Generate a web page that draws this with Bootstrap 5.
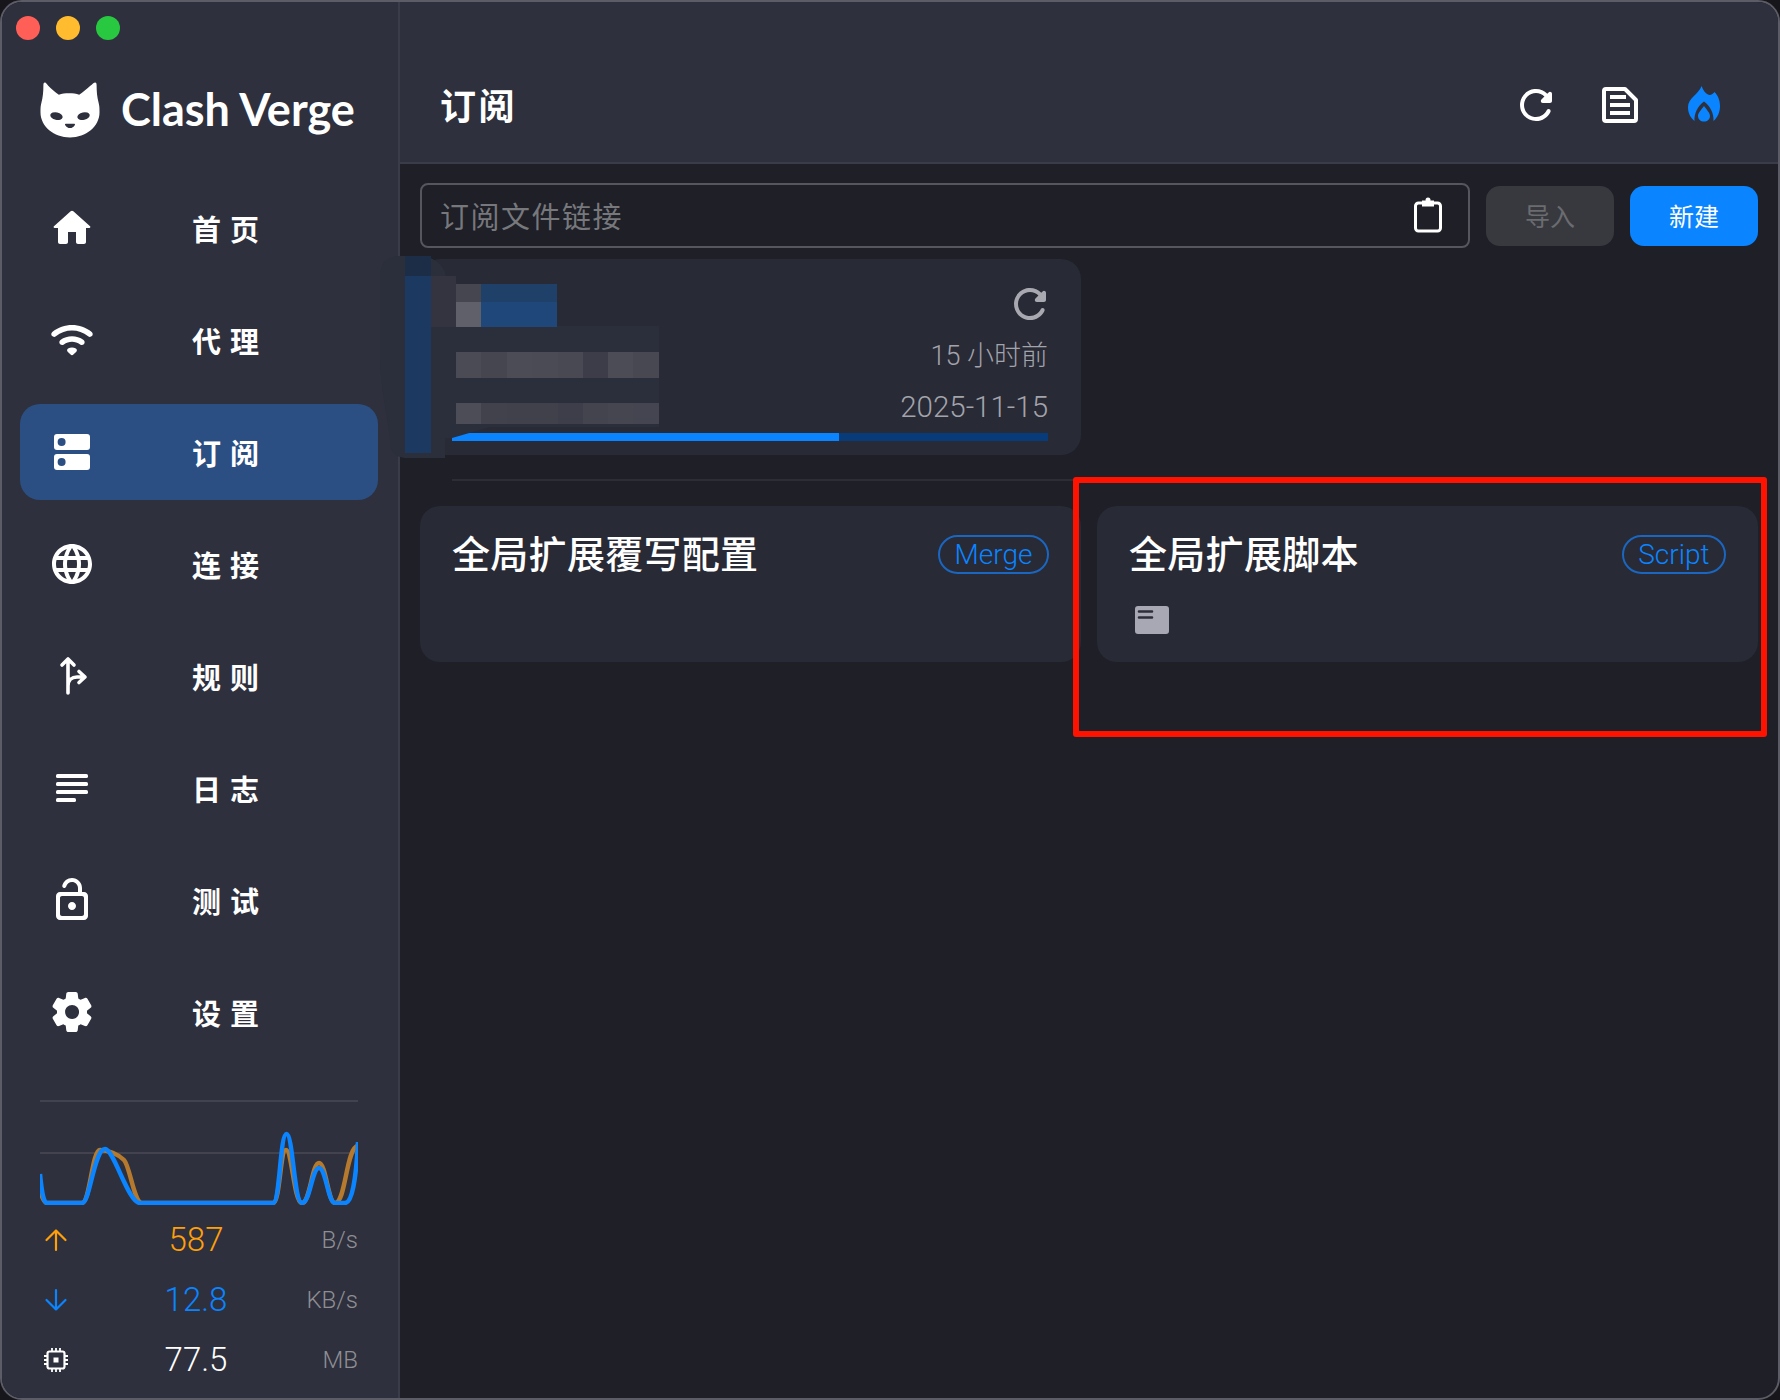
<!doctype html>
<html lang="zh-CN">
<head>
  <meta charset="utf-8">
  <title>Clash Verge</title>
  <link href="https://cdn.jsdelivr.net/npm/bootstrap@5.3.3/dist/css/bootstrap.min.css" rel="stylesheet">
  <style>
    html, body { width: 1780px; height: 1400px; overflow: hidden; background: #17171b; }
    body { font-family: Roboto, "Noto Sans CJK SC", sans-serif; color: #fff; }
    .cv-window { width: 1780px; height: 1400px; border: 2px solid #5b5c66; border-radius: 22px; overflow: hidden; background: #1e1f27; position: relative; }
    .cv-side { width: 398px; flex: none; background: #2e303d; border-right: 2px solid #3a3c49; }
    .cv-side > * { flex-shrink: 0; }
    .cv-lights { height: 54px; padding: 14px 0 0 14px; gap: 16px; }
    .cv-light { width: 24px; height: 24px; border-radius: 50%; }
    .cv-logo { height: 92px; margin-top: 7px; padding-left: 38px; gap: 21px; }
    .cv-brand { font-family: Lato, sans-serif; font-weight: 700; font-size: 45px; line-height: 1; }
    .cv-nav { margin-top: 25px; gap: 16px; padding: 0 20px 0 18px; }
    .cv-nav .nav-link { height: 96px; padding: 0 0 0 28px; border-radius: 20px; color: #fff; display: flex; align-items: center; }
    .cv-nav .nav-link.active { background: #2b4f83; }
    .cv-nav .nav-label { font-family: "Noto Sans CJK SC", sans-serif; font-weight: 700; font-size: 29px; letter-spacing: 9px; margin-left: 96px; line-height: 1; }
    .cv-traffic { margin-top: 40px; padding: 0 40px 0 38px; }
    .cv-sep { height: 2px; background: #42434f; }
    .cv-graph { display: block; }
    .cv-stat { height: 60px; }
    .cv-stat-ico { width: 36px; flex: none; padding-left: 4px; }
    .cv-stat-val { width: 240px; flex: none; text-align: center; font-size: 33px; font-weight: 300; }
    .cv-stat-unit { flex: 1; margin-left: -60px; text-align: right; font-size: 24px; color: #8e8e93; font-weight: 300; }
    .cv-up { color: #ff9f0a; margin-top: 5px; } .cv-down { color: #0a84ff; }
    .cv-head { height: 162px; background: #2e303d; border-bottom: 2px solid #3a3c49; padding: 46px 50px 0 40px; }
    .cv-title { font-family: "Noto Sans CJK SC", sans-serif; font-size: 36px; font-weight: 700; letter-spacing: 2.500px; margin: 0; }
    .cv-tools { gap: 36px; }
    .cv-content { padding: 18px 20px 0 20px; }
    .cv-toolbar { gap: 16px; height: 66px; align-items: center; }
    .cv-url { width: 1050px; height: 65px; border: 2px solid #55565e; border-radius: 8px; padding: 0 25px 0 18px; }
    .cv-url input { background: transparent; border: 0; padding: 2px 0 0; box-shadow: none; color: #fff; font-family: "Noto Sans CJK SC", sans-serif; font-size: 29px; letter-spacing: 1.500px; }
    .cv-url input::placeholder { color: #77787c; opacity: 1; }
    .cv-url input:focus { background: transparent; box-shadow: none; }
    .cv-btn { width: 128px; height: 60px; border: 0; border-radius: 14px; padding: 0; margin-top: 1px; font-family: "Noto Sans CJK SC", sans-serif; font-size: 25px; }
    .cv-btn-off, .cv-btn-off:disabled { background: #38393f; color: #6b6c70; opacity: 1; }
    .cv-btn-new { background: #0a84ff; color: #fff; }
    .cv-grid { display: grid; grid-template-columns: 661px 661px; column-gap: 16px; margin-top: 11px; }
    .cv-card { background: #282a36; border: 0; border-radius: 20px; color: #fff; }
    .cv-profile { height: 196px; position: relative; padding: 21px 33px 0 32px; }
    .cv-meta { color: #a3a3ab; font-weight: 300; line-height: 1; text-align: right; }
    .cv-meta-age { font-size: 27px; margin-top: 15px; }
    .cv-meta-date { font-size: 29.500px; margin-top: 23px; }
    .cv-bar { height: 8px; margin-top: 10px; background: #073b79; border-radius: 0; }
    .cv-bar .progress-bar { background: #0a84ff; }
    .cv-rule { height: 2px; background: #2c2d37; margin: 24px 0 24px 32px; grid-column: 1; }
    .cv-rule-row { height: 51px; }
    .cv-ext { height: 156px; padding: 24px 32px 0 32px; }
    .cv-ext h5 { font-family: "Noto Sans CJK SC", sans-serif; font-size: 38px; font-weight: 500; letter-spacing: .3px; margin: 0; line-height: 44px; }
    .cv-pill { height: 39px; padding: 0 14.500px; margin-top: 5px; border: 2px solid #1a66c0; border-radius: 20px; color: #0a84ff; background: transparent; font-size: 28px; font-weight: 300; line-height: 35px; }
    .cv-file-ico { display: block; margin: 32px 0 0 6px; }
    .cv-mosaic { position: absolute; left: 376px; top: 252px; }
    .cv-redbox { position: absolute; left: 1071px; top: 475px; width: 694px; height: 260px; border: 6px solid #ff1200; border-radius: 3px; }
  </style>
</head>
<body>
  <div class="d-flex cv-window">
    <aside class="d-flex flex-column cv-side">
      <div class="d-flex cv-lights">
        <span class="cv-light" style="background:#ff5f57"></span>
        <span class="cv-light" style="background:#febc2e"></span>
        <span class="cv-light" style="background:#28c840"></span>
      </div>
      <div class="d-flex align-items-center cv-logo">
        <!-- cat logo -->
        <svg width="60" height="57" viewBox="0 0 62 60" preserveAspectRatio="none"><path fill="#fff" d="M5 1.500c-1.200 0-1.500 1.200-1.500 3 0 7-.5 12.500-2 18C.5 26 .5 29 .5 33c0 15 14 26.500 30.500 26.500S61.500 48 61.500 33c0-4 0-7-1-10.500-1.500-5.500-2-11.500-2-18 0-1.800-.3-3-1.500-3-1.300 0-3 1.800-5 3.500-4 3.500-7.500 6.500-11.500 9.500-3-1-6.500-1.500-10.500-1.500s-7.500.5-10.500 1.500C15.500 11.500 12 8.500 8.500 5 7.500 3.500 6.200 1.500 5 1.500z"/><ellipse cx="17" cy="37" rx="6.500" ry="4" transform="rotate(12 17 37)" fill="#2e303d"/><ellipse cx="45" cy="37" rx="6.500" ry="4" transform="rotate(-12 45 37)" fill="#2e303d"/><path fill="#2e303d" d="M26.500 45h9c.8 0 .8 1 .4 1.500-1.200 1.800-2.800 3-4.900 3s-3.700-1.200-4.900-3c-.4-.5-.4-1.500.4-1.500z"/></svg>
        <span class="cv-brand">Clash Verge</span>
      </div>
      <nav class="nav flex-column cv-nav">
        <a class="nav-link" href="#"><svg width="48" height="48" viewBox="0 0 24 24" fill="#fff"><path d="M10 19v-5h4v5c0 .55.45 1 1 1h3c.55 0 1-.45 1-1v-7h1.700c.46 0 .68-.57.33-.87L12.670 3.600c-.38-.34-.96-.34-1.340 0l-8.360 7.530c-.34.300-.13.870.330.870H5v7c0 .55.45 1 1 1h3c.55 0 1-.45 1-1z"/></svg><span class="nav-label">首页</span></a>
        <a class="nav-link" href="#"><svg width="48" height="48" viewBox="0 0 24 24" fill="#fff"><path d="M2.060 10.060c.51.510 1.320.560 1.870.100 4.670-3.840 11.450-3.840 16.130-.01.560.460 1.380.420 1.890-.09.590-.59.550-1.570-.1-2.100-5.710-4.670-13.970-4.670-19.690 0-.65.520-.7 1.500-.1 2.100zm7.760 7.760l1.470 1.470c.39.390 1.020.390 1.410 0l1.470-1.470c.47-.47.370-1.280-.23-1.590-1.220-.63-2.680-.63-3.910 0-.57.310-.68 1.120-.21 1.590zm-3.730-3.730c.49.490 1.260.540 1.830.130 2.440-1.730 5.720-1.730 8.160 0 .57.400 1.340.360 1.830-.13l.01-.01c.6-.6.560-1.620-.13-2.110-3.44-2.490-8.130-2.490-11.580 0-.69.500-.73 1.510-.12 2.120z"/></svg><span class="nav-label">代理</span></a>
        <a class="nav-link active" href="#"><svg width="48" height="48" viewBox="0 0 24 24"><rect x="3" y="3" width="18" height="8" rx="1.500" fill="#fff"/><rect x="3" y="13" width="18" height="8" rx="1.500" fill="#fff"/><circle cx="6.800" cy="7" r="2" fill="#2b4f83"/><circle cx="6.800" cy="17" r="2" fill="#2b4f83"/></svg><span class="nav-label">订阅</span></a>
        <a class="nav-link" href="#"><svg width="48" height="48" viewBox="0 0 24 24" fill="#fff"><path d="M11.990 2C6.470 2 2 6.480 2 12s4.470 10 9.990 10C17.520 22 22 17.520 22 12S17.520 2 11.990 2zm6.930 6h-2.950c-.32-1.250-.78-2.450-1.380-3.560 1.840.63 3.370 1.910 4.330 3.560zM12 4.040c.83 1.200 1.480 2.530 1.910 3.960h-3.820c.43-1.430 1.080-2.760 1.910-3.960zM4.260 14C4.100 13.360 4 12.690 4 12s.1-1.360.26-2h3.380c-.08.66-.14 1.320-.14 2s.06 1.340.14 2H4.260zm.82 2h2.950c.32 1.250.78 2.450 1.380 3.560-1.840-.63-3.370-1.900-4.330-3.560zm2.950-8H5.080c.96-1.660 2.490-2.930 4.330-3.560C8.810 5.550 8.350 6.750 8.030 8zM12 19.960c-.83-1.200-1.480-2.530-1.910-3.960h3.820c-.43 1.430-1.080 2.760-1.910 3.960zM14.340 14H9.660c-.09-.66-.16-1.320-.16-2s.07-1.350.16-2h4.680c.09.650.16 1.320.16 2s-.07 1.340-.16 2zm.25 5.560c.6-1.110 1.060-2.310 1.380-3.560h2.950c-.96 1.650-2.490 2.930-4.330 3.560zM16.360 14c.08-.66.14-1.320.14-2s-.06-1.340-.14-2h3.380c.16.640.26 1.310.26 2s-.1 1.360-.26 2h-3.380z"/></svg><span class="nav-label">连接</span></a>
        <a class="nav-link" href="#"><svg width="48" height="48" viewBox="0 0 48 48" fill="none" stroke="#fff" stroke-width="3.600" stroke-linecap="round" stroke-linejoin="round"><path d="M20 41V8M14 13l6-6 6 6M20 34c0-6 4-9 9-9h7M31 19.500l6 5.500-6 5.500"/></svg><span class="nav-label">规则</span></a>
        <a class="nav-link" href="#"><svg width="48" height="48" viewBox="0 0 24 24" fill="#fff"><rect x="4" y="5" width="16" height="2" rx=".8"/><rect x="4" y="9" width="16" height="2" rx=".8"/><rect x="4" y="13" width="16" height="2" rx=".8"/><rect x="4" y="17" width="10" height="2" rx=".8"/></svg><span class="nav-label">日志</span></a>
        <a class="nav-link" href="#"><svg width="48" height="48" viewBox="0 0 24 24" fill="#fff"><path d="M12 13c-1.100 0-2 .9-2 2s.9 2 2 2 2-.9 2-2-.9-2-2-2zm6-5h-1V6c0-2.760-2.240-5-5-5-2.280 0-4.270 1.540-4.840 3.750-.14.540.180 1.080.720 1.220.530.140 1.080-.18 1.220-.72C9.440 3.930 10.630 3 12 3c1.650 0 3 1.350 3 3v2H6c-1.100 0-2 .9-2 2v10c0 1.100.9 2 2 2h12c1.100 0 2-.9 2-2V10c0-1.100-.9-2-2-2zm0 11c0 .55-.45 1-1 1H7c-.55 0-1-.45-1-1v-8c0-.55.45-1 1-1h10c.55 0 1 .45 1 1v8z"/></svg><span class="nav-label">测试</span></a>
        <a class="nav-link" href="#"><svg width="48" height="48" viewBox="0 0 24 24" fill="#fff"><path d="M19.500 12c0-.23-.01-.45-.03-.68l1.860-1.410c.4-.3.510-.86.260-1.300l-1.870-3.230c-.25-.44-.79-.62-1.250-.42l-2.150.910c-.37-.26-.76-.49-1.170-.68l-.29-2.310c-.06-.5-.49-.88-.99-.88h-3.730c-.51 0-.94.380-1 .880l-.29 2.310c-.41.190-.8.420-1.170.680l-2.150-.91c-.46-.2-1-.02-1.250.420L2.410 8.620c-.25.440-.14.990.260 1.300l1.860 1.410c-.02.220-.03.440-.03.670s.01.450.030.680l-1.860 1.410c-.4.300-.51.860-.26 1.300l1.870 3.230c.25.440.79.620 1.250.420l2.150-.91c.37.260.760.490 1.170.680l.29 2.310c.06.500.49.880.99.880h3.730c.5 0 .93-.38.99-.88l.29-2.310c.41-.19.800-.42 1.170-.68l2.150.910c.46.200 1 .020 1.250-.42l1.870-3.230c.25-.44.14-.99-.26-1.300l-1.860-1.410c.03-.23.04-.45.04-.68zm-7.460 3.500c-1.930 0-3.500-1.570-3.500-3.500s1.570-3.500 3.500-3.500 3.500 1.570 3.500 3.500-1.570 3.500-3.500 3.500z"/></svg><span class="nav-label">设置</span></a>
      </nav>
      <div class="cv-traffic">
        <div class="cv-sep"></div>
        <!-- speed graph, coords are zoom px / 3 -->
        <svg class="cv-graph" width="318" height="103" viewBox="40 1102 318 103">
          <line x1="40" x2="358" y1="1153" y2="1153" stroke="#42434f" stroke-width="2"/>
          <path fill="none" stroke="#b57a2e" stroke-width="4.500" d="M40 1190C42 1198 44 1203 47 1203L82 1203C90 1203 92 1150 100 1150C108 1150 118 1154 124 1160C130 1166 134 1203 142 1203L273 1203C280 1203 280 1150 286 1150C292 1150 294 1203 302 1203C310 1203 312 1163 319 1163C326 1163 328 1203 335 1203C346 1203 346 1147 358 1146"/>
          <path fill="none" stroke="#0a84ff" stroke-width="4.500" d="M40 1174C42 1195 44 1203 47 1203L82 1203C90 1203 94 1149 105 1149C114 1149 128 1203 140 1203L273 1203C280 1203 280 1134 286.500 1134C293 1134 294 1203 302 1203C310 1203 312 1168 319 1168C326 1168 328 1203 335 1203L345 1203C352 1203 356 1180 358 1142"/>
        </svg>
        <div class="d-flex align-items-center cv-stat cv-up">
          <span class="cv-stat-ico"><svg width="24" height="24" viewBox="0 0 24 24" fill="none" stroke="#ff9f0a" stroke-width="2.200" stroke-linecap="round" stroke-linejoin="round"><path d="M12 22V2.500M2.500 12L12 2.500l9.500 9.500"/></svg></span>
          <span class="cv-stat-val">587</span><span class="cv-stat-unit">B/s</span>
        </div>
        <div class="d-flex align-items-center cv-stat cv-down">
          <span class="cv-stat-ico"><svg width="24" height="24" viewBox="0 0 24 24" fill="none" stroke="#0a84ff" stroke-width="2.200" stroke-linecap="round" stroke-linejoin="round"><path d="M12 2v19.500M2.500 12l9.500 9.500 9.500-9.500"/></svg></span>
          <span class="cv-stat-val">12.8</span><span class="cv-stat-unit">KB/s</span>
        </div>
        <div class="d-flex align-items-center cv-stat">
          <span class="cv-stat-ico"><svg width="24" height="24" viewBox="0 0 24 24" fill="none" stroke="#fff" stroke-width="2.200"><rect x="3.500" y="3.500" width="17" height="17" rx="2"/><rect x="9.500" y="9.500" width="5" height="5" fill="#fff" stroke="none"/><path d="M8 0v3M12 0v3M16 0v3M8 21v3M12 21v3M16 21v3M0 8h3M0 12h3M0 16h3M21 8h3M21 12h3M21 16h3" stroke-width="1.800"/></svg></span>
          <span class="cv-stat-val">77.5</span><span class="cv-stat-unit">MB</span>
        </div>
      </div>
    </aside>

    <main class="flex-grow-1 d-flex flex-column">
      <header class="d-flex align-items-center justify-content-between cv-head">
        <h1 class="cv-title">订阅</h1>
        <div class="d-flex cv-tools">
          <svg width="48" height="48" viewBox="0 0 24 24" fill="#fff"><path d="M17.650 6.350c-1.630-1.630-3.940-2.570-6.480-2.310-3.670.370-6.690 3.350-7.100 7.020C3.520 15.910 7.270 20 12 20c3.190 0 5.930-1.870 7.210-4.560.320-.67-.16-1.440-.9-1.440-.37 0-.72.200-.88.530-1.130 2.430-3.840 3.970-6.800 3.310-2.220-.49-4.010-2.300-4.480-4.520C5.310 9.440 8.260 6 12 6c1.660 0 3.140.69 4.220 1.780l-1.510 1.510c-.63.630-.19 1.710.7 1.710H19c.55 0 1-.45 1-1V6.410c0-.89-1.080-1.340-1.710-.71l-.64.650z"/></svg>
          <svg width="48" height="48" viewBox="0 0 48 48" fill="none" stroke="#fff" stroke-width="4" stroke-linejoin="round"><path d="M10 8h19l11 11v19a2 2 0 0 1-2 2H10a2 2 0 0 1-2-2V10a2 2 0 0 1 2-2z"/><path d="M14 16h16M14 24h20M14 32h20"/></svg>
          <svg width="48" height="48" viewBox="0 0 48 48" fill="#0a84ff"><path d="M21.700 5C23 9 25.500 13 29.500 14 31.500 14 33.500 12.500 34.500 11 38.500 15 40 20 40 25 40 31 38 36 33.500 40 34 32 30 25 24 20.500 18 25 14 32 14.500 40 10 36 8 32 8 26 8 17 18 14 21.700 5Z"/><path d="M24 25C27 29 30 32 30 35 30 38.500 27.300 40.500 24 40.500 20.700 40.500 18 38.500 18 35 18 32 21 29 24 25Z"/></svg>
        </div>
      </header>

      <div class="cv-content">
        <div class="d-flex cv-toolbar">
          <div class="d-flex align-items-center cv-url">
            <input class="form-control" type="text" placeholder="订阅文件链接">
            <svg class="flex-shrink-0 ms-2" width="30" height="36" viewBox="0 0 30 36" fill="none" stroke="#fff" stroke-width="3"><rect x="2.500" y="6" width="25" height="28" rx="3"/><path d="M9 3.500h12v6H9z" fill="#fff" stroke="none"/><circle cx="15" cy="3" r="2.500" fill="#fff" stroke="none"/></svg>
          </div>
          <button class="btn cv-btn cv-btn-off" disabled>导入</button>
          <button class="btn cv-btn cv-btn-new">新建</button>
        </div>

        <div class="cv-grid">
          <div class="card cv-card cv-profile">
            <div class="d-flex justify-content-end">
              <svg width="48" height="48" viewBox="0 0 24 24" fill="#a8a8b0" style="margin-right:-6px"><path d="M17.650 6.350c-1.630-1.630-3.940-2.570-6.480-2.310-3.670.370-6.690 3.350-7.100 7.020C3.520 15.910 7.270 20 12 20c3.190 0 5.930-1.870 7.210-4.560.320-.67-.16-1.440-.9-1.440-.37 0-.72.200-.88.530-1.130 2.430-3.840 3.970-6.800 3.310-2.220-.49-4.010-2.300-4.480-4.520C5.310 9.440 8.260 6 12 6c1.660 0 3.140.69 4.220 1.780l-1.510 1.510c-.63.630-.19 1.710.7 1.710H19c.55 0 1-.45 1-1V6.410c0-.89-1.080-1.340-1.710-.71l-.64.650z"/></svg>
            </div>
            <div class="cv-meta cv-meta-age">15 小时前</div>
            <div class="cv-meta cv-meta-date">2025-11-15</div>
            <div class="progress cv-bar"><div class="progress-bar" style="width:65.000%"></div></div>
          </div>
          <div></div>
          <div class="cv-rule-row"><div class="cv-rule"></div></div>
          <div></div>
          <div class="card cv-card cv-ext">
            <div class="d-flex justify-content-between align-items-start">
              <h5>全局扩展覆写配置</h5>
              <span class="cv-pill">Merge</span>
            </div>
          </div>
          <div class="card cv-card cv-ext">
            <div class="d-flex justify-content-between align-items-start">
              <h5>全局扩展脚本</h5>
              <span class="cv-pill">Script</span>
            </div>
            <svg class="cv-file-ico" width="34" height="28" viewBox="0 0 34 28"><rect width="34" height="28" rx="3" fill="#a8a8b4"/><path d="M4 5.500h13M4 11.500h13" stroke="#2b2d39" stroke-width="2.600" stroke-linecap="round"/></svg>
          </div>
        </div>
      </div>
    </main>

    <!-- blurred-out profile name, painted on top of the card and the sidebar edge -->
    <svg class="cv-mosaic" width="290" height="206" viewBox="378 254 290 206">
      <path fill="#2b2e3b" d="M380 275c0-12 8-19 20-19h20c12 0 24 8 26 20l10 50 203 0v101H490L452 438h-7v20h-40c-12-2-12-6-14-10-4-40-11-60-11-90z"/>
      <rect x="405" y="256" width="26" height="20" fill="#1c2e47"/>
      <rect x="405" y="276" width="26" height="177" fill="#1c3a61"/>
      <rect x="431" y="276" width="25" height="51" fill="#33343f"/>
      <rect x="456" y="284" width="25" height="18" fill="#45464f"/>
      <rect x="456" y="302" width="25" height="25" fill="#60606b"/>
      <rect x="481" y="284" width="76" height="18" fill="#1f4068"/>
      <rect x="481" y="302" width="76" height="25" fill="#20477a"/>
      <!-- tile bands -->
      <rect x="456" y="352" width="25" height="26" fill="#4a4b55"/><rect x="481" y="352" width="26" height="26" fill="#45464f"/><rect x="507" y="352" width="25" height="26" fill="#4b4c56"/><rect x="532" y="352" width="26" height="26" fill="#4a4b55"/><rect x="558" y="352" width="25" height="26" fill="#484953"/><rect x="583" y="352" width="25" height="26" fill="#3c3d48"/><rect x="608" y="352" width="25" height="26" fill="#4b4c56"/><rect x="633" y="352" width="26" height="26" fill="#474852"/>
      <rect x="456" y="403" width="25" height="21" fill="#4c4d56"/><rect x="481" y="403" width="26" height="21" fill="#41424c"/><rect x="507" y="403" width="25" height="21" fill="#40414b"/><rect x="532" y="403" width="26" height="21" fill="#40414b"/><rect x="558" y="403" width="25" height="21" fill="#3d3e49"/><rect x="583" y="403" width="25" height="21" fill="#43444e"/><rect x="608" y="403" width="25" height="21" fill="#454650"/><rect x="633" y="403" width="26" height="21" fill="#444550"/>
    </svg>
    <div class="cv-redbox"></div>
  </div>
</body>
</html>
